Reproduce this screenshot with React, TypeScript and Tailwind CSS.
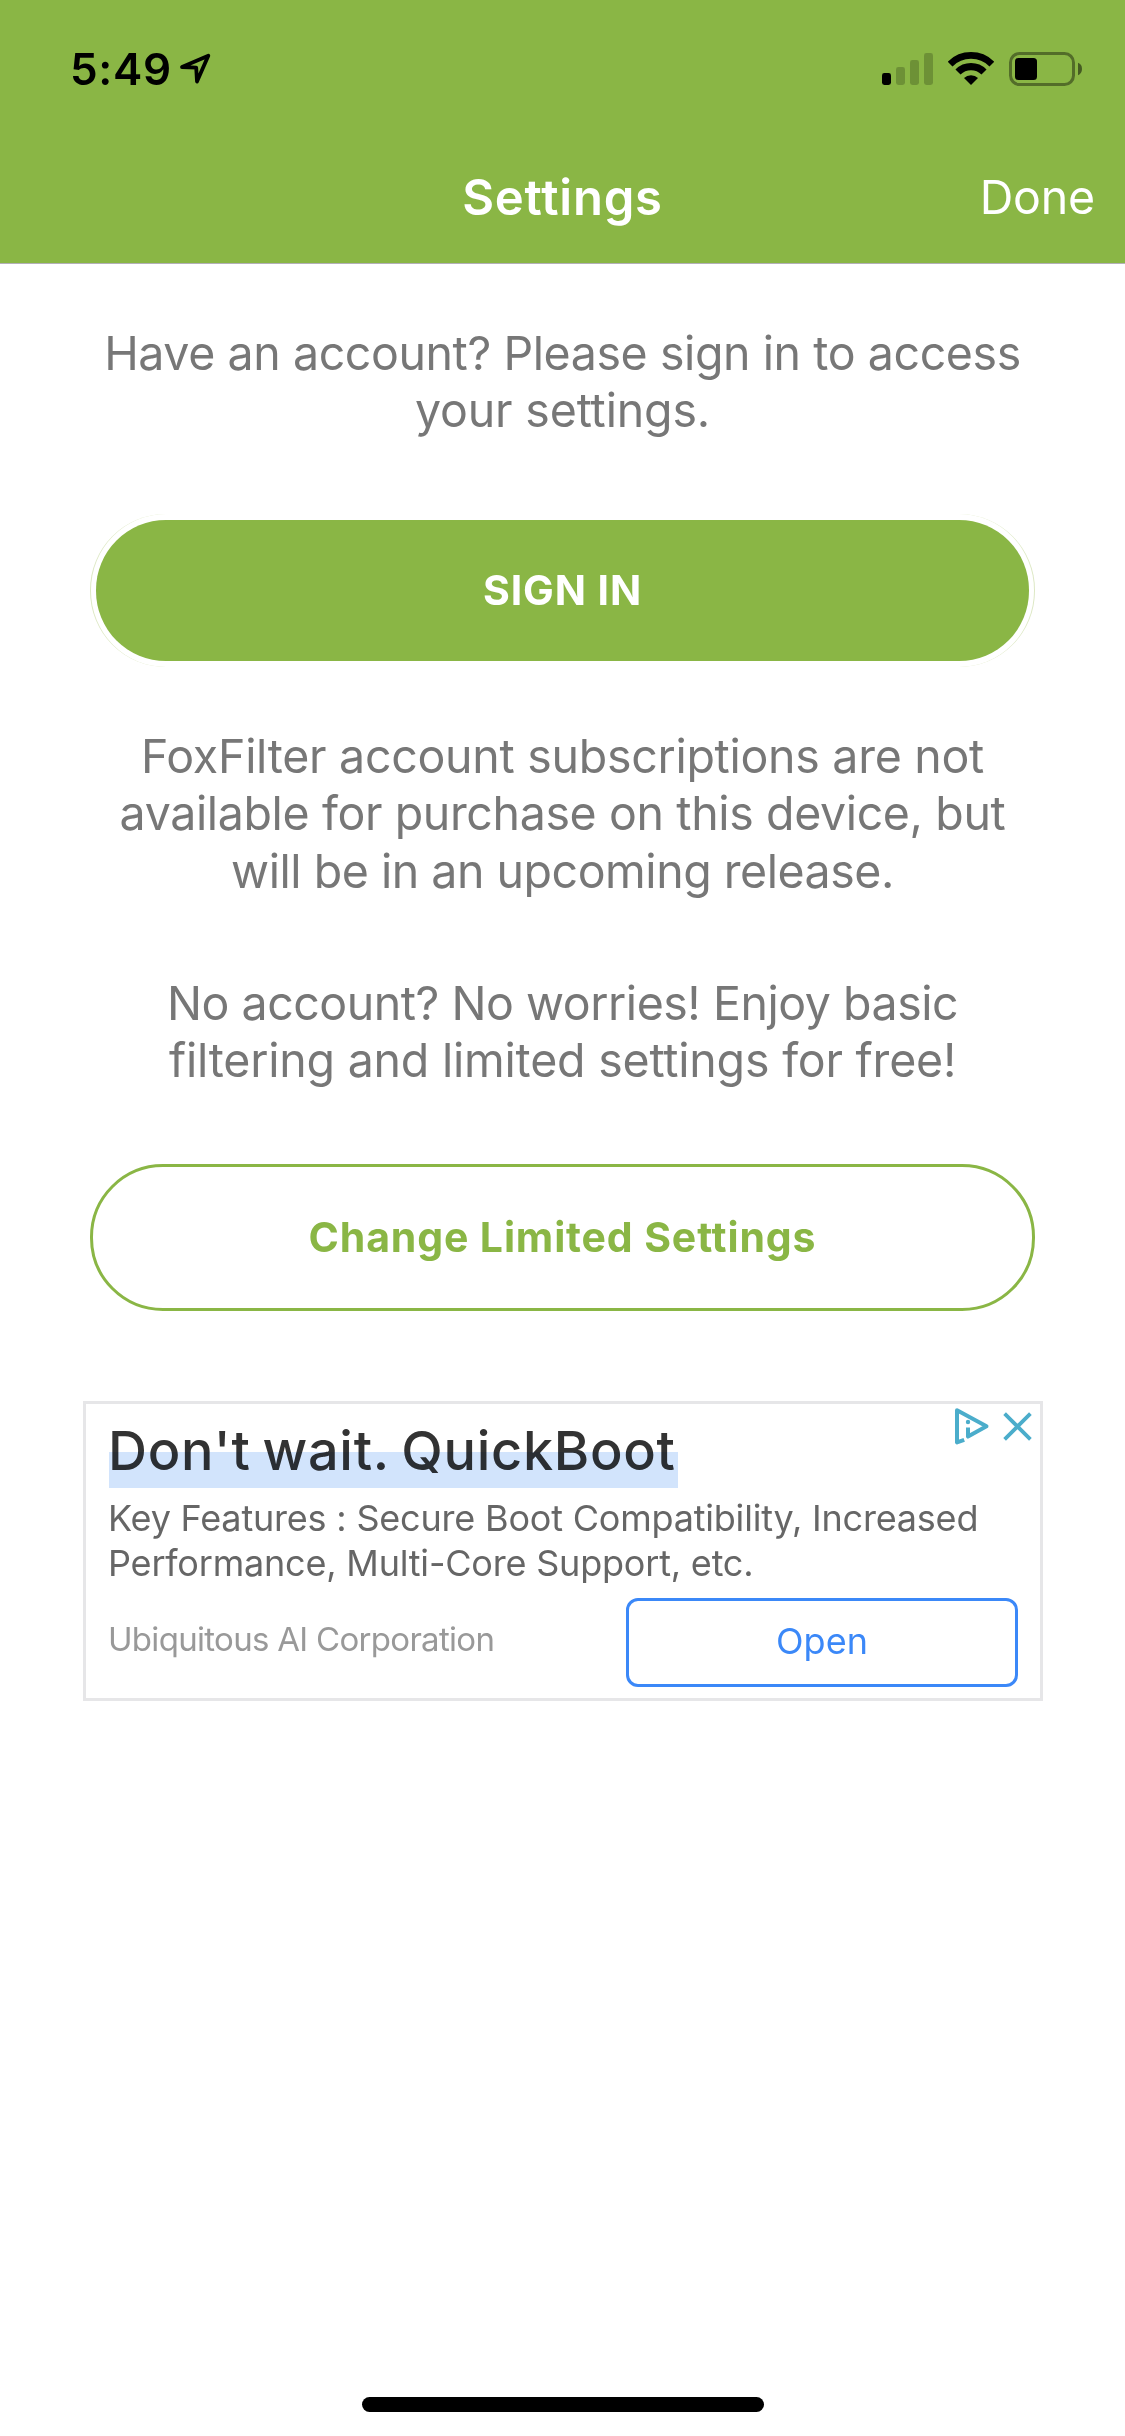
function LocationArrow() {
  return (
    <svg width="34" height="34" viewBox="0 0 34 34" fill="none" stroke="#000" strokeWidth="3.8" strokeLinejoin="round">
      <path d="M4 15 30.3 3.8 19 29.5 18.2 15.6Z" />
    </svg>
  );
}

function SignalIcon() {
  return (
    <svg width="51" height="34" viewBox="0 0 51 34">
      <rect x="0" y="21" width="9" height="12" rx="2.4" />
      <g opacity="0.2">
        <rect x="14" y="15" width="9" height="18" rx="2.4" />
        <rect x="28" y="8" width="9" height="25" rx="2.4" />
        <rect x="42" y="1" width="9" height="32" rx="2.4" />
      </g>
    </svg>
  );
}

function WifiIcon() {
  return (
    <svg width="46" height="34" viewBox="0 0 46 34">
      <path d="M2.1 12.1A29.6 29.6 0 0 1 43.9 12.1" fill="none" stroke="#000" strokeWidth="6.8" />
      <path d="M10 20A18.4 18.4 0 0 1 36 20" fill="none" stroke="#000" strokeWidth="7.2" />
      <path d="M23 33 16 26A10 10 0 0 1 30 26Z" />
    </svg>
  );
}

function BatteryIcon() {
  return (
    <svg width="73" height="34" viewBox="0 0 73 34">
      <rect x="1.5" y="1.5" width="63" height="31" rx="9" fill="none" stroke="#000" strokeWidth="3" opacity="0.4" />
      <rect x="6" y="6" width="22" height="22" rx="3.5" />
      <path d="M69 10.8C71.6 11.8 73 14 73 17S71.6 22.2 69 23.2Z" opacity="0.5" />
    </svg>
  );
}

function AdChoices() {
  return (
    <svg
      className="absolute top-px right-[6px]"
      width="83"
      height="43"
      viewBox="0 0 83 43"
      fill="none"
      stroke="#4badcb"
      strokeWidth="4"
      strokeLinejoin="round"
    >
      <path d="M13.2 34.8 6 37.4V5.3L35.5 21.3 17 31.6V22.4" />
      <circle cx="17" cy="17" r="2.2" fill="#4badcb" stroke="none" />
      <path d="M53.6 8.6 79.4 34.4M79.4 8.6 53.6 34.4" strokeWidth="3.8" />
    </svg>
  );
}

export default function App() {
  return (
    <div className="flex h-[2436px] w-[1125px] flex-col bg-white font-['Inter','Liberation_Sans',sans-serif]">
      <header className="h-[264px] border-b border-[#b3b0b8] bg-[#8ab645]">
        <div className="flex h-[132px] items-start pt-[52px] pr-[43px] pl-[70px] text-black">
          <span className="w-[108px] text-[44px] leading-[34px] font-semibold tracking-[0.66px]">5:49</span>
          <LocationArrow />
          <div className="ml-auto flex gap-[15px]">
            <SignalIcon />
            <WifiIcon />
            <BatteryIcon />
          </div>
        </div>
        <nav className="grid h-[131px] grid-cols-3 items-center px-[30px] text-white">
          <span />
          <h1 className="text-center text-[49px] font-semibold tracking-[0.8px]">Settings</h1>
          <button className="text-right text-[46.5px] tracking-[-0.2px]">Done</button>
        </nav>
      </header>

      <main className="flex flex-col pt-[61px] text-center text-[46.5px] leading-[57.3px] text-[#777]">
        <p className="h-[115px]">
          <span className="tracking-[-0.41px]">Have an account? Please sign in to access</span>
          <br />
          <span className="tracking-[-0.15px]">your settings.</span>
        </p>

        <div className="mx-[90px] mt-[74px] flex h-[153px] rounded-[76px] border-x border-[#dde8c4] px-[5px] py-[6px]">
          <button className="w-full rounded-[70px] bg-[#8ab645] text-[41px] font-bold tracking-[0.9px] text-white">
            SIGN IN
          </button>
        </div>

        <p className="mt-[61px] h-[172px]">
          <span className="tracking-[-0.28px]">FoxFilter account subscriptions are not</span>
          <br />
          <span className="tracking-[-0.37px]">available for purchase on this device, but</span>
          <br />
          <span className="tracking-[-0.47px]">will be in an upcoming release.</span>
        </p>

        <p className="mt-[75px] h-[115px]">
          <span className="tracking-[-0.46px]">No account? No worries! Enjoy basic</span>
          <br />
          <span className="tracking-[-0.21px]">filtering and limited settings for free!</span>
        </p>

        <button className="mx-[90px] mt-[74px] h-[147px] rounded-[73px] border-[3px] border-[#8ab645] text-[41px] font-bold tracking-[0.86px] text-[#8ab645]">
          Change Limited Settings
        </button>
      </main>

      {/* Ad banner */}
      <section className="relative mt-[90px] ml-[83px] h-[300px] w-[960px] border-[3px] border-[#e6e6e8] pt-3 pr-[22px] pl-[22px]">
        <h2 className="relative ml-px h-[72px] w-[569px] indent-[-1px] text-[54px] leading-[70px] font-medium tracking-[0.7px] [word-spacing:-3px] whitespace-nowrap text-[#333]">
          Don't wait. QuickBoot
          <span className="absolute inset-x-0 bottom-0 h-9 bg-[#d2e4fc] mix-blend-multiply" />
        </h2>
        <p className="mt-2 text-[36px] leading-[45px] tracking-[-0.2px] text-[#666]">
          Key Features : Secure Boot Compatibility, Increased
          <br />
          Performance, Multi-Core Support, etc.
        </p>
        <div className="mt-3 flex h-[89px] items-center justify-between">
          <span className="pb-[5px] text-[33px] tracking-[-0.7px] text-[#999]">Ubiquitous AI Corporation</span>
          <button className="h-[89px] w-[392px] rounded-xl border-[3px] border-[#3b88f8] pb-[4px] text-[36px] text-[#3b88f8]">
            Open
          </button>
        </div>
        <AdChoices />
      </section>

      <div className="mt-auto mb-6 ml-[362px] h-[15px] w-[402px] rounded-full bg-black" />
    </div>
  );
}
